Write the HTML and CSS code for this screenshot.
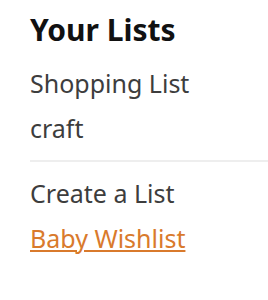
FILE: index.html
```html
<!DOCTYPE html>
<html>
<head>
<meta charset="utf-8">
<link rel="stylesheet" href="styles.css">
</head>
<body>
<div class="panel">
  <h2 class="title">Your Lists</h2>
  <ul class="lists">
    <li class="item">Shopping List</li>
    <li class="item">craft</li>
  </ul>
  <hr class="divider">
  <ul class="lists">
    <li class="item">Create a List</li>
    <li class="item"><a class="link" href="#">Baby Wishlist</a></li>
  </ul>
</div>
</body>
</html>
```

FILE: styles.css
```css
html, body {
  margin: 0;
  padding: 0;
  background: #ffffff;
}
.panel {
  padding: 10px 0 0 30px;
  font-family: "Noto Sans", "Open Sans", sans-serif;
}
.title {
  margin: 0 0 11px 0;
  font-size: 30px;
  font-weight: 700;
  line-height: 40px;
  color: #111111;
}
.lists {
  list-style: none;
  margin: 0;
  padding: 0;
}
.item {
  font-size: 25px;
  line-height: 45px;
  color: #3d3d3d;
}
.divider {
  border: 0;
  height: 2px;
  background: #eeeeee;
  margin: 9px 0 9px 0;
}
.link {
  color: #d97a2c;
  text-decoration: underline;
  text-decoration-thickness: 2px;
  text-underline-offset: 2px;
}
```
